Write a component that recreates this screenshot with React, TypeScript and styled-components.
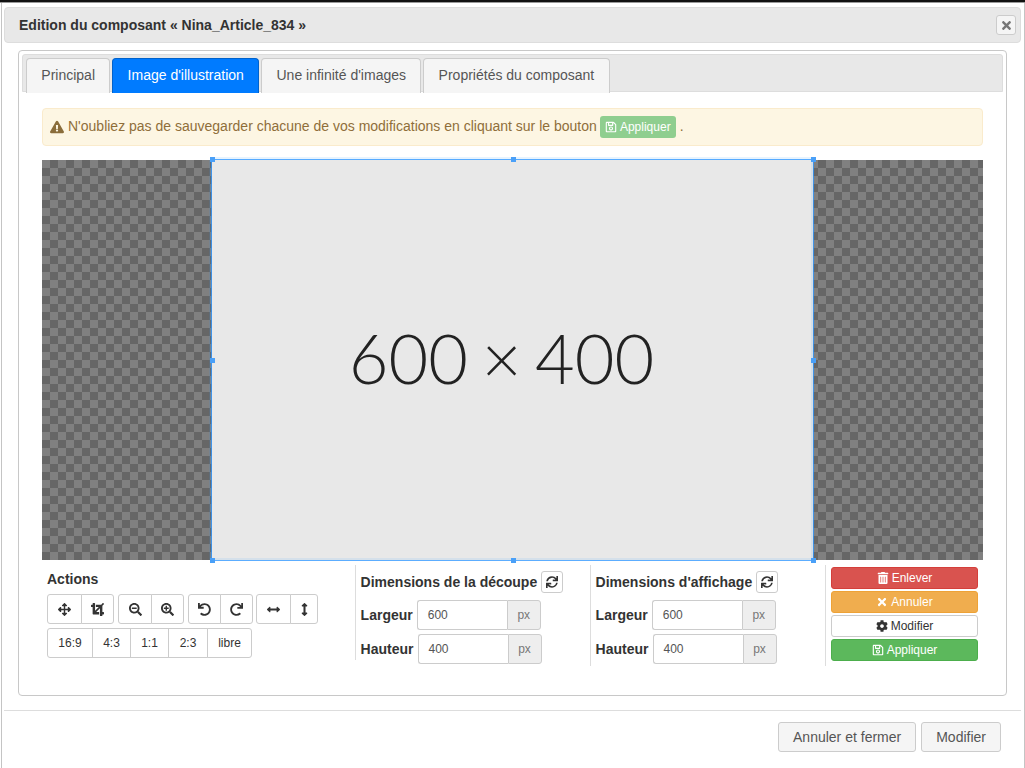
import React from "react";
import styled, { createGlobalStyle } from "styled-components";
import {
  FaArrowsAlt, FaCrop, FaSearchMinus, FaSearchPlus, FaUndo, FaRedo, FaArrowsAltH, FaArrowsAltV,
  FaSync, FaTrashAlt, FaTimes, FaCog, FaRegSave, FaExclamationTriangle,
} from "react-icons/fa";

const Global = createGlobalStyle`
  html, body { margin: 0; padding: 0; background: #fff; }
  body { font-family: "Liberation Sans", Arial, sans-serif; font-size: 14px; color: #333; line-height: 20px; }
  * { box-sizing: border-box; }
`;
const Page = styled.div`width: 1025px; height: 768px; overflow: hidden;`;
const TopStrip = styled.div`height: 3px; background: #111; border-bottom: 1px solid #999;`;
const Modal = styled.div`
  height: 765px; margin-left: 1px; border-left: 1px solid #c4c4c4; border-right: 1px solid #c4c4c4;
  padding: 4px 3px 0 2px; display: flex; flex-direction: column;
`;
const Header = styled.div`
  height: 36px; background: #e8e8e8; border: 1px solid #ddd; border-radius: 4px;
  display: flex; align-items: center; justify-content: space-between; padding: 0 4px 0 14px;
`;
const Title = styled.h4`margin: 0; font-size: 14px; font-weight: 700; color: #333;`;
const Close = styled.button`
  width: 20px; height: 20px; padding: 0; border: 1px solid #ccc; border-radius: 3px; background: #f5f5f5;
  color: #777; display: flex; align-items: center; justify-content: center; font-size: 13px;
`;
const Panel = styled.div`
  margin: 7px 14px 0 14px; height: 646px; border: 1px solid #c8c8c8; border-radius: 4px; padding: 3px;
`;
const TabBar = styled.div`
  height: 38px; background: #e8e8e8; border: 1px solid #ddd; border-radius: 3px 3px 0 0;
  padding: 3px 0 0 3px; display: flex; gap: 2px;
`;
const Tab = styled.div<{ $active?: boolean }>`
  height: 35px; padding: 0 14.3px; border: 1px solid ${(p) => (p.$active ? "#0062cc" : "#ccc")}; border-bottom: 0;
  border-radius: 4px 4px 0 0; background: ${(p) => (p.$active ? "#007bff" : "#f5f5f5")};
  color: ${(p) => (p.$active ? "#fff" : "#555")}; line-height: 33px; font-size: 14px; white-space: nowrap;
`;
const Content = styled.div`padding: 16px 20px 0 20px;`;
const Alert = styled.div`
  height: 38px; background: #fdf6e3; border: 1px solid #faebcc; border-radius: 4px; color: #8f6e3a;
  display: flex; align-items: center; padding: 0 7px 2px; white-space: pre; font-size: 14px;
`;
const WarnIcon = styled(FaExclamationTriangle)`font-size: 14px; color: #8a6d3b; margin: 2px 4px 0 0;`;
const GhostApply = styled.span`
  height: 22px; width: 76px; margin: 2px 0 0 3px; background: #8fce8f; color: #fff; border-radius: 3px; font-size: 12px;
  display: inline-flex; align-items: center; justify-content: center; gap: 3px;
`;
const Cropper = styled.div`
  position: relative; margin-top: 14px; height: 400px;
  background-color: #808080;
  background-image: conic-gradient(#666 25%, #808080 0 50%, #666 0 75%, #808080 0);
  background-size: 16px 16px;
`;
const CropBox = styled.div`
  position: absolute; left: 170px; top: 0; width: 601px; height: 400px; background: #e8e8e8;
  outline: 1px solid rgba(51, 153, 255, 0.8);
  box-shadow: 0 -3px 0 rgba(51, 153, 255, 0.12), -3px 0 0 rgba(51, 153, 255, 0.12),
    inset 0 -2px 0 rgba(51, 153, 255, 0.1), inset -2px 0 0 rgba(51, 153, 255, 0.1);
  display: flex; align-items: center; justify-content: center;
`;
const PlaceholderText = styled.span`
  font-family: Lato, "Open Sans", sans-serif; font-weight: 300; font-size: 68.5px; word-spacing: -5px; color: #222;
  line-height: 1; margin: 0 22px 3px 0;
`;
const Handle = styled.i<{ $x: number; $y: number }>`
  position: absolute; width: 5px; height: 5px; background: #4aa0f8;
  left: calc(${(p) => p.$x}% - 2px); top: calc(${(p) => p.$y}% - ${(p) => 3 - p.$y / 100}px);
`;
const Controls = styled.div`display: grid; grid-template-columns: 313px 235px 235px 158px; padding-top: 5px;`;
const Col = styled.div<{ $h: number; $pad: number; $sep?: boolean }>`
  height: ${(p) => p.$h}px; padding-left: ${(p) => p.$pad}px;
  border-left: 1px solid ${(p) => (p.$sep ? "#ddd" : "transparent")};
`;
const ActionsTitle = styled.div`font-weight: 700; height: 29px; padding-top: 4px; color: #333;`;
const BtnRow = styled.div`display: flex; gap: 4px; margin-bottom: 4px;`;
const Group = styled.div<{ $pull?: boolean }>`display: flex; margin-left: ${(p) => (p.$pull ? "-1px" : "0")};`;
const IconBtn = styled.button<{ $w: number }>`
  width: ${(p) => p.$w}px; height: 30px; padding: 0; margin: 0 -1px 0 0; background: #fff; border: 1px solid #ccc;
  display: flex; align-items: center; justify-content: center; color: #333; font-size: 12px;
  font-family: inherit;
  & > svg { width: 13px; height: 13px; }
  &:first-child { border-radius: 3px 0 0 3px; }
  &:last-child { border-radius: 0 3px 3px 0; margin-right: 0; }
`;
const DimTitle = styled.div`display: flex; align-items: center; gap: 3.5px; font-weight: 700; height: 22px; margin: 6px 0 7px; color: #333; white-space: nowrap;`;
const SmallIconBtn = styled.button`
  width: 22.5px; height: 22px; padding: 0; background: #fff; border: 1px solid #ccc; border-radius: 3px; color: #333;
  display: flex; align-items: center; justify-content: center; font-size: 12px;
`;
const Field = styled.div`display: flex; align-items: center; margin-bottom: 4px; height: 30px;`;
const FieldLabel = styled.label`font-weight: 700; margin-right: 4px; color: #333;`;
const InputBox = styled.div`
  width: 90px; height: 30px; padding-left: 10px; border: 1px solid #ccc; border-right: 0; border-radius: 3px 0 0 3px;
  color: #555; font-size: 12px; line-height: 28px; background: #fff;
`;
const Addon = styled.div`
  width: 34px; height: 30px; background: #eee; border: 1px solid #ccc; border-radius: 0 3px 3px 0;
  color: #777; font-size: 12px; line-height: 28px; text-align: center;
`;
const Stack = styled.div`display: flex; flex-direction: column; gap: 2px; width: 147px; padding-top: 2px;`;
const COLORS = {
  danger: ["#d9534f", "#d43f3a", "#fff"],
  warning: ["#f0ad4e", "#eea236", "#fff"],
  plain: ["#fff", "#ccc", "#333"],
  success: ["#5cb85c", "#4cae4c", "#fff"],
} as const;
const StackBtn = styled.button<{ $kind: keyof typeof COLORS }>`
  height: 22px; padding: 0; border: 1px solid ${(p) => COLORS[p.$kind][1]}; border-radius: 3px;
  background: ${(p) => COLORS[p.$kind][0]}; color: ${(p) => COLORS[p.$kind][2]};
  font-family: inherit; font-size: 12px; display: flex; align-items: center; justify-content: center; gap: 3px;
`;
const Footer = styled.div`
  margin-top: 14px; border-top: 1px solid #ddd; height: 58px; padding: 11px 20px 0 0;
  display: flex; justify-content: flex-end; gap: 5px;
`;
const FootBtn = styled.button`
  height: 30px; padding: 0 14px; background: #f5f5f5; border: 1px solid #ccc; border-radius: 3px; color: #555;
  font-family: inherit; font-size: 14px;
`;

const handles = [[0,0],[50,0],[100,0],[0,50],[100,50],[0,100],[50,100],[100,100]];

const Dim = ({ title, h }: { title: string; h: number }) => (
  <Col $sep $h={h} $pad={4.6}>
    <DimTitle>{title}<SmallIconBtn><FaSync /></SmallIconBtn></DimTitle>
    <Field><FieldLabel>Largeur</FieldLabel><InputBox>600</InputBox><Addon>px</Addon></Field>
    <Field><FieldLabel>Hauteur</FieldLabel><InputBox>400</InputBox><Addon>px</Addon></Field>
  </Col>
);

export default function App() {
  return (
    <Page>
      <Global />
      <TopStrip />
      <Modal>
        <Header>
          <Title>Edition du composant « Nina_Article_834 »</Title>
          <Close aria-label="Fermer"><FaTimes /></Close>
        </Header>
        <Panel>
          <TabBar>
            <Tab>Principal</Tab>
            <Tab $active>Image d'illustration</Tab>
            <Tab>Une infinité d'images</Tab>
            <Tab>Propriétés du composant</Tab>
          </TabBar>
          <Content>
            <Alert>
              <WarnIcon />N'oubliez pas de sauvegarder chacune de vos modifications en cliquant sur le bouton
              <GhostApply><FaRegSave />Appliquer</GhostApply> .
            </Alert>
            <Cropper>
              <CropBox>
                <PlaceholderText>600 × 400</PlaceholderText>
                {handles.map(([x, y]) => <Handle key={`${x}-${y}`} $x={x} $y={y} />)}
              </CropBox>
            </Cropper>
            <Controls>
              <Col $h={95} $pad={4}>
                <ActionsTitle>Actions</ActionsTitle>
                <BtnRow>
                  <Group>
                    <IconBtn $w={35}><FaArrowsAlt /></IconBtn>
                    <IconBtn $w={33}><FaCrop /></IconBtn>
                  </Group>
                  <Group>
                    <IconBtn $w={34}><FaSearchMinus /></IconBtn>
                    <IconBtn $w={33}><FaSearchPlus /></IconBtn>
                  </Group>
                  <Group>
                    <IconBtn $w={33}><FaUndo /></IconBtn>
                    <IconBtn $w={33}><FaRedo /></IconBtn>
                  </Group>
                  <Group $pull>
                    <IconBtn $w={35}><FaArrowsAltH /></IconBtn>
                    <IconBtn $w={28}><FaArrowsAltV /></IconBtn>
                  </Group>
                </BtnRow>
                <Group>
                  <IconBtn $w={46}>16:9</IconBtn>
                  <IconBtn $w={39}>4:3</IconBtn>
                  <IconBtn $w={39}>1:1</IconBtn>
                  <IconBtn $w={40}>2:3</IconBtn>
                  <IconBtn $w={45}>libre</IconBtn>
                </Group>
              </Col>
              <Dim title="Dimensions de la découpe" h={95} />
              <Dim title="Dimensions d'affichage" h={101} />
              <Col $sep $h={101} $pad={5}>
                <Stack>
                  <StackBtn $kind="danger"><FaTrashAlt />Enlever</StackBtn>
                  <StackBtn $kind="warning"><FaTimes />Annuler</StackBtn>
                  <StackBtn $kind="plain"><FaCog />Modifier</StackBtn>
                  <StackBtn $kind="success"><FaRegSave />Appliquer</StackBtn>
                </Stack>
              </Col>
            </Controls>
          </Content>
        </Panel>
        <Footer>
          <FootBtn>Annuler et fermer</FootBtn>
          <FootBtn>Modifier</FootBtn>
        </Footer>
      </Modal>
    </Page>
  );
}
